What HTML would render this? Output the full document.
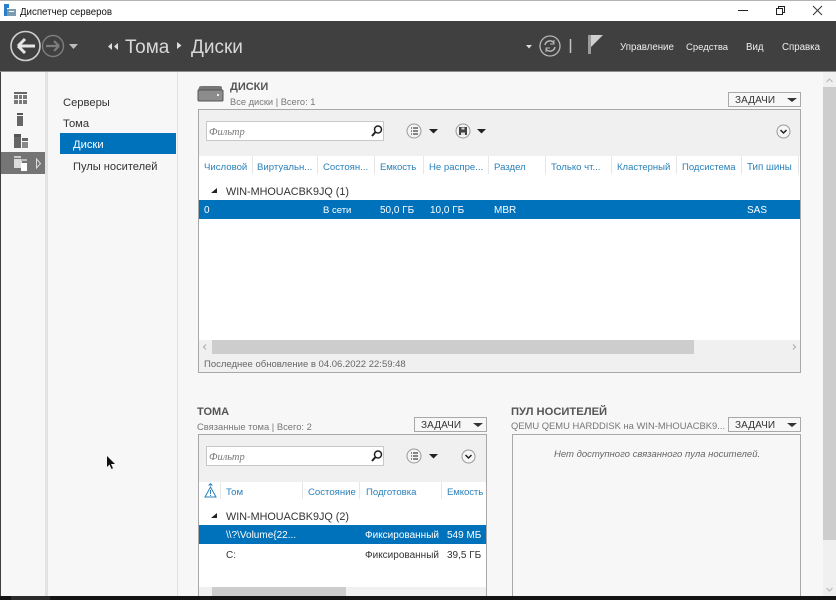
<!DOCTYPE html>
<html lang="ru"><head><meta charset="utf-8"><title>Диспетчер серверов</title>
<style>
html,body{margin:0;padding:0;background:#f7f7f7}
#r{position:relative;width:836px;height:600px;overflow:hidden;background:#f7f7f7;font-family:"Liberation Sans",sans-serif;font-size:10px;color:#333}
#r div,#r span.t{position:absolute}
.t{white-space:nowrap;position:absolute;line-height:12px;margin-top:1px}
.h{color:#2a80b9;font-size:9.6px}
.hs{position:absolute;width:1px;background:#e6e6e6}
.w{color:#fff}
.task{background:#f7f7f7;border:1px solid #a9a9a9;box-sizing:border-box;width:73px;height:15px}
.task i{position:absolute;left:6px;top:1px;font-style:normal;font-size:10px;line-height:13px;color:#333;letter-spacing:.1px}
.task b{position:absolute;left:58px;top:5px;border-left:5px solid transparent;border-right:5px solid transparent;border-top:4px solid #333;width:0;height:0}
.filter{background:#fff;border:1px solid #c8c8c8;box-sizing:border-box;width:178px;height:20px}
.filter i{position:absolute;left:2px;top:5px;font-style:italic;font-size:10.5px;line-height:12px;color:#777;font-family:"Liberation Serif",serif}
svg{position:absolute;overflow:visible}
</style></head><body>
<div id="r">
<!-- title bar -->
<div style="left:0;top:0;width:836px;height:1px;background:#b4b4b4"></div>
<div style="left:0;top:1px;width:836px;height:20px;background:#fff"></div>
<svg style="left:3px;top:4px" width="13" height="13" viewBox="0 0 13 13"><rect x="1" y="0" width="5" height="4" fill="#2a7fc8"/><rect x="1" y="4" width="3" height="8" fill="#2a7fc8"/><rect x="4" y="5" width="9" height="7" fill="#7d9bb0"/><rect x="6" y="7" width="5" height="1" fill="#fff"/></svg>
<span class="t" style="left:20px;top:6px;font-size:9.7px;color:#111">Диспетчер серверов</span>
<svg style="left:735px;top:5px" width="95" height="12" viewBox="0 0 95 12"><path d="M3 5.5H13" stroke="#222" stroke-width="1"/><path d="M41.5 3.5h6v6h-6zM43.5 3.5V1.5h6v6h-2" fill="none" stroke="#222" stroke-width="1"/><path d="M78 1L87 10M87 1L78 10" stroke="#333" stroke-width="1"/></svg>

<!-- header -->
<div style="left:0;top:21px;width:836px;height:50px;background:#404040"></div>
<div style="left:0;top:71px;width:836px;height:1px;background:#8c8c8c"></div>
<svg style="left:0;top:21px" width="100" height="50" viewBox="0 0 100 50">
<circle cx="25.5" cy="25" r="14.5" fill="none" stroke="#cfcfcf" stroke-width="1.6"/>
<path d="M18 25H35M18 25l7-7M18 25l7 7" fill="none" stroke="#e6e6e6" stroke-width="3"/>
<circle cx="53" cy="25" r="10.5" fill="none" stroke="#7d7d7d" stroke-width="1.4"/>
<path d="M59 25H46M59 25l-5-5M59 25l-5 5" fill="none" stroke="#7d7d7d" stroke-width="2.2"/>
<path d="M69 23h9l-4.500 5z" fill="#bdbdbd"/>
</svg>
<svg style="left:107px;top:43px" width="14" height="8" viewBox="0 0 14 8"><path d="M5 0v7L1 3.500zM11 0v7L7 3.500z" fill="#ddd"/></svg>
<span class="t" style="left:125px;top:35px;font-size:19px;line-height:24px;color:#d8d8d8">Тома</span>
<svg style="left:176px;top:42px" width="7" height="8" viewBox="0 0 7 8"><path d="M1 0v7l4.500-3.500z" fill="#ddd"/></svg>
<span class="t" style="left:191px;top:35px;font-size:19px;line-height:24px;color:#d8d8d8">Диски</span>
<svg style="left:524px;top:37px" width="80" height="24" viewBox="0 0 80 24">
<path d="M2 8h6l-3 3.500z" fill="#ddd"/>
<circle cx="26" cy="9" r="10" fill="none" stroke="#b8b8b8" stroke-width="1.3"/>
<path d="M21 8a5 5 0 0 1 9-2M31 10a5 5 0 0 1-9 2" fill="none" stroke="#b8b8b8" stroke-width="1.500"/>
<path d="M30 3v4h-4M22 15v-4h4" fill="none" stroke="#b8b8b8" stroke-width="1"/>
<path d="M46.500 2v14" stroke="#c4c4c4" stroke-width="1.500"/>
</svg>
<svg style="left:587px;top:34px" width="18" height="21" viewBox="0 0 18 21"><rect x="1" y="1" width="3" height="19" fill="#9a9a9a"/><path d="M4 1H16L4 13z" fill="#cfcfcf"/></svg>
<span class="t" style="left:620px;top:41px;font-size:9.700px;color:#eee">Управление</span>
<span class="t" style="left:686px;top:41px;font-size:9.500px;color:#eee">Средства</span>
<span class="t" style="left:746px;top:41px;font-size:9.700px;color:#eee">Вид</span>
<span class="t" style="left:782px;top:41px;font-size:9.700px;color:#eee">Справка</span>

<!-- left icon rail -->
<div style="left:0;top:72px;width:1px;height:524px;background:#404040"></div>
<div style="left:45px;top:72px;width:3px;height:524px;background:#e3e3e3"></div>
<div style="left:177px;top:72px;width:1px;height:524px;background:#e3e3e3"></div>
<svg style="left:13px;top:91px" width="16" height="16" viewBox="0 0 16 16"><rect x="1" y="1" width="13" height="2" fill="#666"/><path d="M1 4h4v4H1zM6 4h3v4H6zM10 4h4v4h-4zM1 9h4v4H1zM6 9h3v4H6zM10 9h4v4h-4z" fill="#7a7a7a"/></svg>
<svg style="left:13px;top:112px" width="16" height="16" viewBox="0 0 16 16"><rect x="4" y="1" width="6" height="2" fill="#555"/><rect x="4" y="4" width="6" height="10" fill="#666"/></svg>
<svg style="left:13px;top:134px" width="16" height="16" viewBox="0 0 16 16"><rect x="1" y="0" width="7" height="3" fill="#555"/><rect x="1" y="3" width="7" height="11" fill="#666"/><rect x="9" y="4" width="6" height="3" fill="#666"/><rect x="9" y="8" width="6" height="6" fill="#888"/></svg>
<div style="left:1px;top:152px;width:44px;height:22px;background:#757575"></div>
<svg style="left:13px;top:156px" width="30" height="16" viewBox="0 0 30 16"><rect x="1" y="0" width="7" height="2" fill="#ccc"/><rect x="1" y="3" width="8" height="9" fill="#ddd"/><rect x="8" y="3" width="6" height="2" fill="#bbb"/><rect x="8" y="7" width="6" height="8" fill="#fff"/><path d="M23.500 3v9l4-4.500z" fill="none" stroke="#ddd"/></svg>

<!-- nav -->
<span class="t" style="left:63px;top:96px;font-size:11.200px;color:#333">Серверы</span>
<span class="t" style="left:63px;top:117px;font-size:11.200px;color:#333">Тома</span>
<div style="left:60px;top:133px;width:116px;height:21px;background:#0072bc"></div>
<span class="t w" style="left:73px;top:138px;font-size:11.200px">Диски</span>
<span class="t" style="left:73px;top:160px;font-size:11.100px;color:#333">Пулы носителей</span>

<!-- scrollbar main -->
<div style="left:823px;top:72px;width:13px;height:524px;background:#f0f0f0"></div>
<div style="left:823px;top:87px;width:13px;height:453px;background:#cdcdcd"></div>
<svg style="left:823px;top:72px" width="13" height="524" viewBox="0 0 13 524"><path d="M3.500 10l3-3 3 3" fill="none" stroke="#b5b5b5"/><path d="M3.500 516l3 3 3-3" fill="none" stroke="#b5b5b5"/></svg>

<!-- Disks section -->
<svg style="left:197px;top:85px" width="27" height="18" viewBox="0 0 27 18"><path d="M2 2.500Q2 1 5 1H22Q25 1 25 2.500V5H1z" fill="#777"/><rect x="1" y="5" width="25" height="11" rx="1" fill="#8c8c8c" stroke="#555"/><rect x="20" y="9" width="2" height="2" fill="#eee"/></svg>
<span class="t" style="left:230px;top:80px;font-size:11px;font-weight:bold;color:#555">ДИСКИ</span>
<span class="t" style="left:230px;top:95px;font-size:9.300px;color:#777">Все диски | Всего: 1</span>
<div class="task" style="left:728px;top:92px"><i>ЗАДАЧИ</i><b></b></div>
<div style="left:198px;top:109px;width:603px;height:264px;box-sizing:border-box;border:1px solid #a8a8a8;background:#fff"></div>
<div style="left:199px;top:110px;width:601px;height:46px;background:#f0f0f0"></div>
<div class="filter" style="left:206px;top:121px"><i>Фильтр</i></div>
<svg style="left:370px;top:124px" width="14" height="14" viewBox="0 0 14 14"><circle cx="8" cy="5.500" r="3.500" fill="none" stroke="#222" stroke-width="1.500"/><path d="M5.500 8L2 12" stroke="#222" stroke-width="2"/></svg>
<svg style="left:406px;top:123px" width="90" height="16" viewBox="0 0 90 16">
<circle cx="8" cy="8" r="7" fill="#f4f4f4" stroke="#999"/><path d="M5 5h1M5 8h1M5 11h1M7 5h5M7 8h5M7 11h5" stroke="#444" stroke-width="1.200"/>
<path d="M23 6h9l-4.500 4.500z" fill="#222"/>
<circle cx="57" cy="8" r="7" fill="#f4f4f4" stroke="#999"/><path d="M53 4h8v8h-8z" fill="#444"/><rect x="55.500" y="4.500" width="3" height="2" fill="#ddd"/><rect x="55" y="9.500" width="4" height="2.500" fill="#ddd"/>
<path d="M71 6h9l-4.500 4.500z" fill="#222"/>
</svg>
<svg style="left:776px;top:124px" width="15" height="15" viewBox="0 0 15 15"><circle cx="7.500" cy="7.500" r="6.500" fill="#f7f7f7" stroke="#999"/><path d="M4.500 6l3 3 3-3" fill="none" stroke="#222" stroke-width="1.500"/></svg>

<span class="t h" style="left:204px;top:161px">Числовой</span>
<span class="t h" style="left:257px;top:161px">Виртуальн...</span>
<span class="t h" style="left:323px;top:161px">Состоян...</span>
<span class="t h" style="left:380px;top:161px;letter-spacing:-.1px">Емкость</span>
<span class="t h" style="left:429px;top:161px">Не распре...</span>
<span class="t h" style="left:494px;top:161px">Раздел</span>
<span class="t h" style="left:551px;top:161px">Только чт...</span>
<span class="t h" style="left:617px;top:161px;font-size:9.500px">Кластерный</span>
<span class="t h" style="left:682px;top:161px;font-size:9.500px">Подсистема</span>
<span class="t h" style="left:747px;top:161px;font-size:9.800px">Тип шины</span>
<div class="hs" style="left:252px;top:156px;height:18px"></div>
<div class="hs" style="left:317px;top:156px;height:18px"></div>
<div class="hs" style="left:374px;top:156px;height:18px"></div>
<div class="hs" style="left:423px;top:156px;height:18px"></div>
<div class="hs" style="left:488px;top:156px;height:18px"></div>
<div class="hs" style="left:545px;top:156px;height:18px"></div>
<div class="hs" style="left:611px;top:156px;height:18px"></div>
<div class="hs" style="left:676px;top:156px;height:18px"></div>
<div class="hs" style="left:741px;top:156px;height:18px"></div>
<div class="hs" style="left:798px;top:156px;height:18px"></div>

<svg style="left:211px;top:188px" width="7" height="6" viewBox="0 0 7 6"><path d="M6 0v5H0z" fill="#222"/></svg>
<span class="t" style="left:226px;top:185px;font-size:10.800px;color:#333">WIN-MHOUACBK9JQ (1)</span>
<div style="left:199px;top:200px;width:601px;height:19px;background:#0072bc"></div>
<span class="t w" style="left:204px;top:204px">0</span>
<span class="t w" style="left:323px;top:204px;font-size:9.500px">В сети</span>
<span class="t w" style="left:380px;top:204px">50,0 ГБ</span>
<span class="t w" style="left:430px;top:204px">10,0 ГБ</span>
<span class="t w" style="left:494px;top:204px">MBR</span>
<span class="t w" style="left:747px;top:204px">SAS</span>

<div style="left:199px;top:340px;width:601px;height:32px;background:#f0f0f0"></div>
<div style="left:212px;top:340px;width:482px;height:14px;background:#cdcdcd"></div>
<svg style="left:199px;top:340px" width="601" height="14" viewBox="0 0 601 14"><path d="M7 4.500l-2.500 2.500 2.500 2.500" fill="none" stroke="#aaa"/><path d="M594 4.500l2.500 2.500-2.500 2.500" fill="none" stroke="#aaa"/></svg>
<span class="t" style="left:204px;top:358px;font-size:9.500px;color:#666">Последнее обновление в 04.06.2022 22:59:48</span>

<!-- Volumes -->
<span class="t" style="left:197px;top:405px;font-size:11px;font-weight:bold;color:#555">ТОМА</span>
<span class="t" style="left:197px;top:420px;font-size:9.400px;color:#777">Связанные тома | Всего: 2</span>
<div class="task" style="left:414px;top:417px"><i>ЗАДАЧИ</i><b></b></div>
<div style="left:198px;top:434px;width:289px;height:170px;box-sizing:border-box;border:1px solid #a8a8a8;background:#fff"></div>
<div style="left:199px;top:435px;width:287px;height:47px;background:#f0f0f0"></div>
<div class="filter" style="left:206px;top:446px"><i>Фильтр</i></div>
<svg style="left:370px;top:449px" width="14" height="14" viewBox="0 0 14 14"><circle cx="8" cy="5.500" r="3.500" fill="none" stroke="#222" stroke-width="1.500"/><path d="M5.500 8L2 12" stroke="#222" stroke-width="2"/></svg>
<svg style="left:406px;top:448px" width="42" height="16" viewBox="0 0 42 16"><circle cx="8" cy="8" r="7" fill="#f4f4f4" stroke="#999"/><path d="M5 5h1M5 8h1M5 11h1M7 5h5M7 8h5M7 11h5" stroke="#444" stroke-width="1.200"/><path d="M23 6h9l-4.500 4.500z" fill="#222"/></svg>
<svg style="left:461px;top:449px" width="15" height="15" viewBox="0 0 15 15"><circle cx="7.500" cy="7.500" r="6.500" fill="#f7f7f7" stroke="#999"/><path d="M4.500 6l3 3 3-3" fill="none" stroke="#222" stroke-width="1.500"/></svg>
<svg style="left:204px;top:483px" width="13" height="15" viewBox="0 0 13 15"><path d="M6.500 0l2.500 2.500h-5z" fill="#2a80b9"/><path d="M6.500 4L12 14H1z" fill="none" stroke="#2a80b9"/><path d="M6.500 7v4M6.500 12v1" stroke="#2a80b9"/></svg>
<span class="t h" style="left:226px;top:486px">Том</span>
<span class="t h" style="left:308px;top:486px">Состояние</span>
<span class="t h" style="left:366px;top:486px">Подготовка</span>
<span class="t h" style="left:447px;top:486px;letter-spacing:-.1px">Емкость</span>
<div class="hs" style="left:220px;top:482px;height:17px"></div>
<div class="hs" style="left:302px;top:482px;height:17px"></div>
<div class="hs" style="left:359px;top:482px;height:17px"></div>
<div class="hs" style="left:441px;top:482px;height:17px"></div>
<svg style="left:211px;top:513px" width="7" height="6" viewBox="0 0 7 6"><path d="M6 0v5H0z" fill="#222"/></svg>
<span class="t" style="left:226px;top:510px;font-size:10.800px;color:#333">WIN-MHOUACBK9JQ (2)</span>
<div style="left:199px;top:525px;width:287px;height:19px;background:#0072bc"></div>
<span class="t w" style="left:226px;top:529px">\\?\Volume{22...</span>
<span class="t w" style="left:365px;top:529px">Фиксированный</span>
<span class="t w" style="left:447px;top:529px">549 МБ</span>
<span class="t" style="left:226px;top:549px">C:</span>
<span class="t" style="left:365px;top:549px">Фиксированный</span>
<span class="t" style="left:447px;top:549px">39,5 ГБ</span>
<div style="left:199px;top:587px;width:287px;height:9px;background:#f0f0f0"></div>
<div style="left:212px;top:587px;width:134px;height:9px;background:#cdcdcd"></div>

<!-- Pool -->
<span class="t" style="left:511px;top:405px;font-size:11.200px;font-weight:bold;color:#555">ПУЛ НОСИТЕЛЕЙ</span>
<span class="t" style="left:511px;top:419px;font-size:9.400px;color:#777">QEMU QEMU HARDDISK на WIN-MHOUACBK9...</span>
<div class="task" style="left:728px;top:417px"><i>ЗАДАЧИ</i><b></b></div>
<div style="left:512px;top:434px;width:289px;height:170px;box-sizing:border-box;border:1px solid #a8a8a8;background:#f7f7f7"></div>
<span class="t" style="left:554px;top:448px;font-size:9.500px;font-style:italic;color:#666">Нет доступного связанного пула носителей.</span>

<!-- cursor -->
<svg style="left:107px;top:456px" width="9" height="14" viewBox="0 0 9 14"><path d="M0 0v11l2.500-2.500 2 4.500 1.500-.7-2-4.300H8z" fill="#111"/></svg>

<!-- bottom -->
<div style="left:0;top:596px;width:836px;height:4px;background:#141414"></div>
<div style="left:11px;top:596px;width:39px;height:4px;background:#2b2b2b"></div>
</div>
</body></html>
